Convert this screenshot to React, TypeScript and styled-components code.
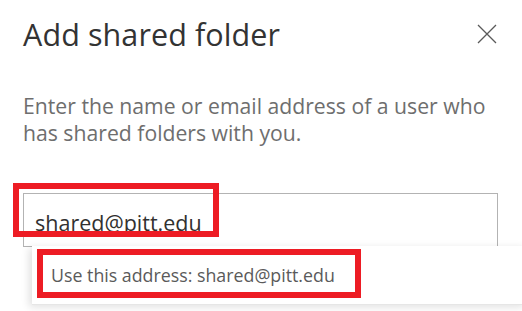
import styled, { createGlobalStyle } from "styled-components";

const GlobalStyle = createGlobalStyle`
	html, body {
		margin: 0;
		padding: 0;
		background: #ffffff;
		overflow: hidden;
	}
	body {
		font-family: "Open Sans", "Noto Sans", sans-serif;
	}
`;

const Panel = styled.div`
	width: 522px;
	height: 311px;
	box-sizing: border-box;
	padding: 13px 24px 0 23px;
	display: flex;
	flex-direction: column;
	background: #ffffff;
	position: relative;
`;

const Header = styled.div`
	display: flex;
	align-items: center;
	justify-content: space-between;
	height: 42px;
`;

const Title = styled.h1`
	margin: 0;
	font-size: 30.5px;
	font-weight: 400;
	color: #333333;
	letter-spacing: 0.1px;
`;

const CloseButton = styled.button`
	width: 24px;
	height: 24px;
	padding: 0;
	margin-right: -1px;
	border: none;
	background: transparent;
	display: flex;
	align-items: center;
	justify-content: center;
	color: #5a5a5a;
	cursor: pointer;
`;

const Description = styled.p`
	margin: 37px 0 0 0;
	width: 480px;
	font-size: 21.2px;
	line-height: 27px;
	color: #6e6e6e;
`;

const Field = styled.div`
	position: relative;
	margin-top: 47px;
	height: 54px;
	box-sizing: border-box;
	border: 1px solid #b3b3b3;
	display: flex;
	align-items: center;
	padding: 5px 12px 0 11px;
`;

const FieldText = styled.span`
	font-size: 21.5px;
	color: #323130;
`;

const Suggestions = styled.ul`
	position: absolute;
	top: 52px;
	left: 8px;
	right: -30px;
	margin: 0;
	padding: 0;
	list-style: none;
	background: #ffffff;
	box-shadow: -3px 2px 8px rgba(0, 0, 0, 0.12);
`;

const Suggestion = styled.li`
	height: 59px;
	box-sizing: border-box;
	display: flex;
	align-items: center;
	padding: 0 0 0 19px;
	font-size: 17.8px;
	color: #5a5a5a;
	border-bottom: 1px solid #e6e6e6;
`;

const Highlight = styled.div<{ $top: number; $left: number; $width: number; $height: number }>`
	position: absolute;
	top: ${p => p.$top}px;
	left: ${p => p.$left}px;
	width: ${p => p.$width}px;
	height: ${p => p.$height}px;
	box-sizing: border-box;
	border: 6px solid #ed1c24;
	pointer-events: none;
`;

function CloseIcon() {
	return (
		<svg width="20" height="20" viewBox="0 0 20 20">
			<path d="M1 1 L19 19 M19 1 L1 19" stroke="currentColor" strokeWidth="1.3" fill="none" />
		</svg>
	);
}

function App() {
	return (
		<>
			<GlobalStyle />
			<Panel>
				<Header>
					<Title>Add shared folder</Title>
					<CloseButton aria-label="Close">
						<CloseIcon />
					</CloseButton>
				</Header>
				<Description>
					Enter the name or email address of a user who has shared folders with you.
				</Description>
				<Field>
					<FieldText>shared@pitt.edu</FieldText>
					<Suggestions>
						<Suggestion>Use this address: shared@pitt.edu</Suggestion>
					</Suggestions>
				</Field>
				<Highlight $top={183} $left={13} $width={206} $height={54} />
				<Highlight $top={249} $left={37} $width={324} $height={49} />
			</Panel>
		</>
	);
}

export default App;
